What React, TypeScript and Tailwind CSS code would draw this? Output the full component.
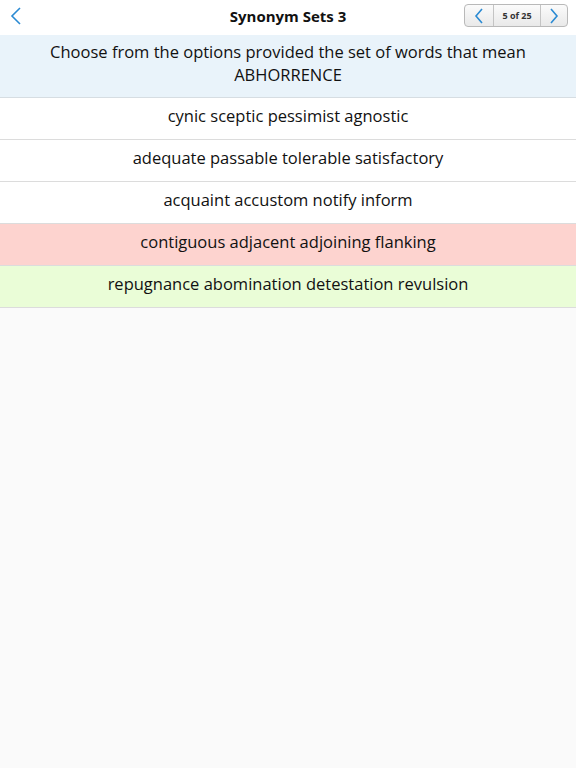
export default function App() {
  const options = [
    { text: 'cynic sceptic pessimist agnostic', bg: 'bg-white' },
    { text: 'adequate passable tolerable satisfactory', bg: 'bg-white' },
    { text: 'acquaint accustom notify inform', bg: 'bg-white' },
    { text: 'contiguous adjacent adjoining flanking', bg: 'bg-[#fdd3cf]' },
    { text: 'repugnance abomination detestation revulsion', bg: 'bg-[#eafdd7]' },
  ];

  return (
    <div className="h-[768px] w-[576px] bg-[#fafafa] font-['Open_Sans',sans-serif] text-[#111]">
      {/* nav bar */}
      <div className="flex h-[35px] items-center bg-white px-2">
        <div className="flex w-[100px] items-center">
          <svg width="14" height="20" viewBox="0 0 14 20" className="ml-[1px] -mt-[3px]">
            <path d="M11 2 L3 10 L11 18" fill="none" stroke="#2a8ad3" strokeWidth="1.6" />
          </svg>
        </div>
        <div className="-mt-[3px] flex-1 text-center text-[15px] font-bold">Synonym Sets 3</div>
        <div className="flex w-[100px] justify-end">
          <div className="-mt-[4px] flex h-[23px] items-stretch rounded-[4px] border border-[#b9b9b9] bg-gradient-to-b from-[#fbfbfb] to-[#e9e9e9]">
            <div className="flex w-[29px] items-center justify-center border-r border-[#c4c4c4]">
              <svg width="12" height="18" viewBox="0 0 12 18">
                <path d="M9 2 L3 9 L9 16" fill="none" stroke="#2a8ad3" strokeWidth="1.6" />
              </svg>
            </div>
            <div className="flex w-[46px] items-center justify-center text-[9px] font-bold text-[#333]">5 of 25</div>
            <div className="flex w-[27px] items-center justify-center border-l border-[#c4c4c4]">
              <svg width="12" height="18" viewBox="0 0 12 18">
                <path d="M3 2 L9 9 L3 16" fill="none" stroke="#2a8ad3" strokeWidth="1.6" />
              </svg>
            </div>
          </div>
        </div>
      </div>

      {/* question */}
      <div className="flex h-[63px] flex-col items-center justify-center border-b border-[#d6dde2] bg-[#e9f3fa] pb-[6px] text-center text-[16.5px] leading-[23px]">
        <div>Choose from the options provided the set of words that mean</div>
        <div>ABHORRENCE</div>
      </div>

      {/* options */}
      {options.map((o) => (
        <div
          key={o.text}
          className={`flex h-[42px] items-center justify-center border-b border-[#dcdcdc] pb-[4px] text-[16.5px] ${o.bg}`}
        >
          {o.text}
        </div>
      ))}
    </div>
  );
}
